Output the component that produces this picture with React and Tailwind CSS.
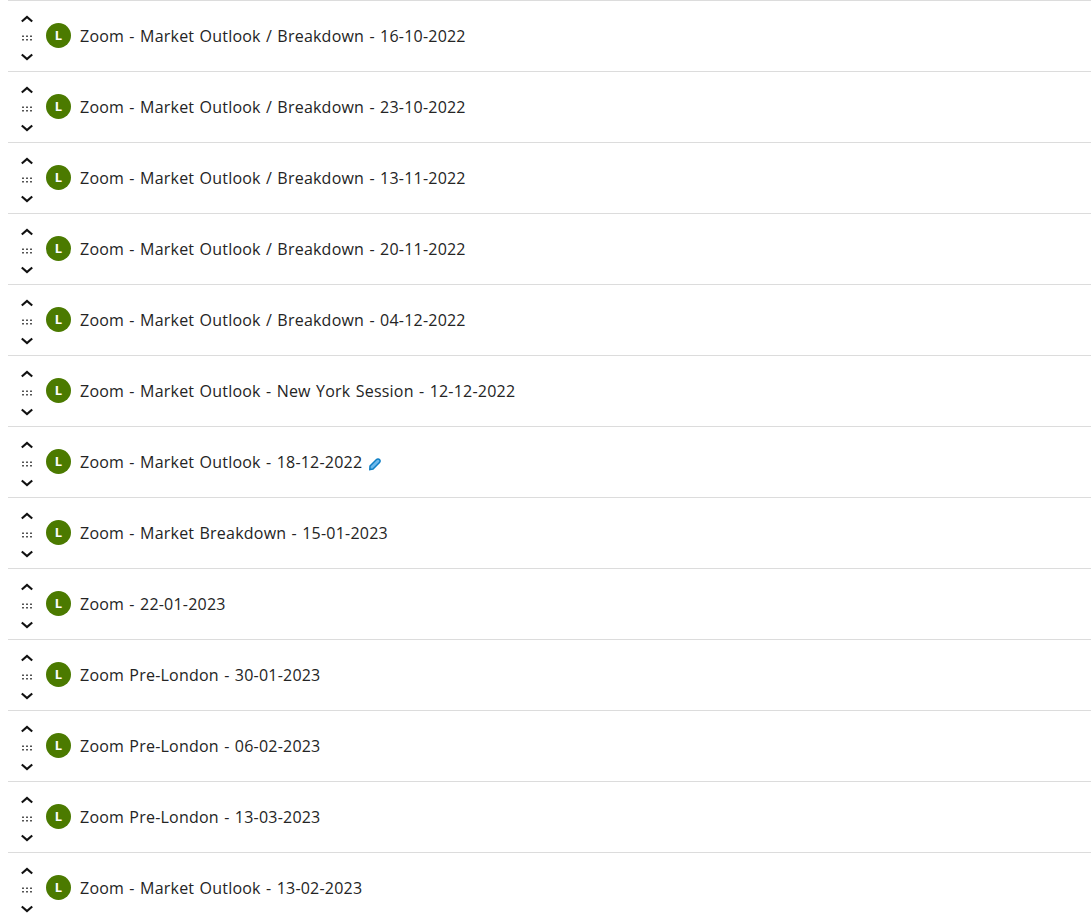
const rows = [
  { title: "Zoom - Market Outlook / Breakdown - 16-10-2022" },
  { title: "Zoom - Market Outlook / Breakdown - 23-10-2022" },
  { title: "Zoom - Market Outlook / Breakdown - 13-11-2022" },
  { title: "Zoom - Market Outlook / Breakdown - 20-11-2022" },
  { title: "Zoom - Market Outlook / Breakdown - 04-12-2022" },
  { title: "Zoom - Market Outlook - New York Session - 12-12-2022" },
  { title: "Zoom - Market Outlook - 18-12-2022", editing: true },
  { title: "Zoom - Market Breakdown - 15-01-2023" },
  { title: "Zoom - 22-01-2023" },
  { title: "Zoom Pre-London - 30-01-2023" },
  { title: "Zoom Pre-London - 06-02-2023" },
  { title: "Zoom Pre-London - 13-03-2023" },
  { title: "Zoom - Market Outlook - 13-02-2023" },
];

const Chevron = ({ down }) => (
  <svg width="14" height="8" viewBox="0 0 14 8" fill="none" stroke="#111" strokeWidth="2.2">
    <path d={down ? "M1.8 1.5 7 6l5.2-4.5" : "M1.8 6.5 7 2l5.2 4.5"} />
  </svg>
);

const GripIcon = () => (
  <svg width="11" height="6" viewBox="0 0 11 6" fill="#555">
    {[0, 4, 8].map((x) => (
      <g key={x}>
        <rect x={x} y="0.5" width="2" height="1.5" />
        <rect x={x} y="4" width="2" height="1.5" />
      </g>
    ))}
  </svg>
);

const PencilIcon = () => (
  <svg width="14" height="14" viewBox="0 0 14 14" fill="#6cb8ec" stroke="#0f7fc4" strokeWidth="1.5">
    <path d="M2 9 8.5 2.5a1.6 1.6 0 0 1 3 3L5 12l-3.2.6z" />
  </svg>
);

const Row = ({ title, editing }) => (
  <div className="flex h-[71px] items-center border-t border-[#dcdcdc] pl-[12px]">
    <div className="mt-1 flex w-[14px] flex-col items-center">
      <Chevron />
      <div className="my-[12px] flex">
        <GripIcon />
      </div>
      <Chevron down />
    </div>
    <div className="mb-px ml-[12px] flex h-[25px] w-[25px] items-center justify-center rounded-full bg-[#4b7a00] text-[13px] font-bold text-white">
      L
    </div>
    <span className="ml-[9px] text-base tracking-[0.22px] text-[#242424] [word-spacing:0.9px]">{title}</span>
    {editing && (
      <span className="ml-[6px] mt-1 flex">
        <PencilIcon />
      </span>
    )}
  </div>
);

export default function App() {
  return (
    <div className="h-[920px] overflow-hidden bg-white pl-2 font-['Open_Sans',sans-serif]">
      {rows.map((row) => (
        <Row key={row.title} title={row.title} editing={row.editing} />
      ))}
    </div>
  );
}
